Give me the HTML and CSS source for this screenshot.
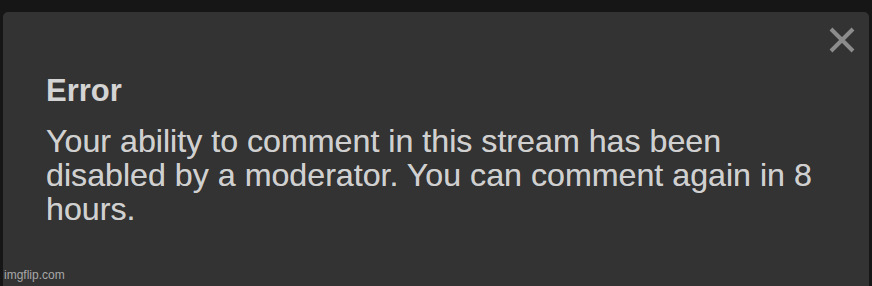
FILE: index.html
```html
<!DOCTYPE html>
<html>
<head>
<meta charset="utf-8">
<link rel="stylesheet" href="styles.css">
</head>
<body>
<div class="frame">
  <div class="dialog">
    <button class="close" aria-label="Close">
      <svg viewBox="0 0 28 28" width="28" height="28"><path d="M3 3 L25 25 M25 3 L3 25" stroke="#8c8c8c" stroke-width="4" stroke-linecap="butt" fill="none"/></svg>
    </button>
    <h2 class="title">Error</h2>
    <p class="message">Your ability to comment in this stream has been disabled by a moderator. You can comment again in 8 hours.</p>
  </div>
  <span class="watermark">imgflip.com</span>
</div>
</body>
</html>
```
FILE: styles.css
```css
html, body {
  margin: 0;
  padding: 0;
  background: #161616;
  height: 100%;
  overflow: hidden;
}
.frame {
  position: relative;
  height: 286px;
  padding: 12px 3px 0 3px;
  box-sizing: border-box;
  display: flex;
}
.dialog {
  position: relative;
  flex: 1;
  background: #333333;
  border-radius: 5px 5px 0 0;
  padding: 62px 40px 0 43px;
  font-family: "Liberation Sans", Arial, sans-serif;
  color: #d0d0d0;
}
.title {
  margin: 0;
  font-size: 31px;
  line-height: 34px;
  font-weight: bold;
  color: #d4d4d4;
}
.message {
  margin: 16px 0 0 0;
  font-size: 32.2px;
  line-height: 34px;
  max-width: 790px;
  text-shadow: 0 0 0.6px rgba(208, 208, 208, 0.6);
}
.close {
  position: absolute;
  top: 14px;
  right: 13px;
  width: 28px;
  height: 28px;
  padding: 0;
  border: 0;
  background: none;
  display: flex;
}
.watermark {
  position: absolute;
  left: 4px;
  bottom: 4px;
  font-family: "Liberation Sans", Arial, sans-serif;
  font-size: 12px;
  color: #a8a8a8;
}
```
